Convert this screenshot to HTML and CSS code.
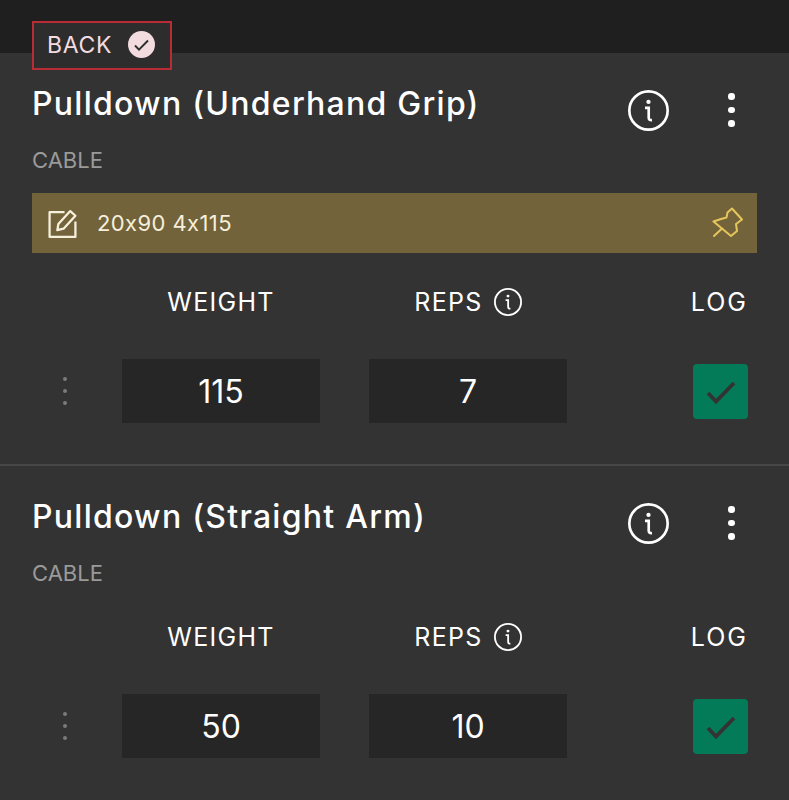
FILE: index.html
```html
<!DOCTYPE html>
<html lang="en">
<head>
    <meta charset="UTF-8">
    <meta name="viewport" content="width=device-width, initial-scale=1.0">
    <title>Workout</title>
    <link rel="stylesheet" href="styles.css">
</head>
<body>
    <svg class="icon-defs" width="0" height="0">
        <symbol id="info" viewBox="0 0 40 40">
            <circle cx="20" cy="20" r="18.7" fill="none" stroke="currentColor" stroke-width="2.6"/>
            <circle cx="20" cy="11.6" r="2.1" fill="currentColor"/>
            <path d="M16.6 17.4h3.6v9.600c0 1.800 1 2.600 3.200 2.400" fill="none" stroke="currentColor" stroke-width="2.6"/>
        </symbol>
        <symbol id="check" viewBox="0 0 30 30">
            <path d="M2 17l8 8.500L28 7" fill="none" stroke="currentColor" stroke-width="3.8"/>
        </symbol>
    </svg>

    <header class="topbar">
        <button class="back-button" type="button">
            <span>BACK</span>
            <span class="back-badge">
                <svg width="15" height="15"><use href="#check"/></svg>
            </span>
        </button>
    </header>

    <section class="exercise">
        <div class="exercise-head">
            <h2 class="exercise-title">Pulldown (Underhand Grip)</h2>
            <svg class="head-info" width="41" height="41"><use href="#info"/></svg>
            <div class="more-dots"><i></i><i></i><i></i></div>
        </div>
        <div class="exercise-type">CABLE</div>
        <div class="note">
            <svg class="note-edit" width="31" height="31" viewBox="0 0 30 30" fill="none" stroke="currentColor" stroke-width="2.2" stroke-linejoin="round">
                <path d="M17 4H2.500v24h25V13"/>
                <path d="M11 15.500L22.500 3l5 4.500-11.500 12.500-6 1.500z"/>
            </svg>
            <span class="note-text">20x90 4x115</span>
            <svg class="note-pin" width="32" height="32" viewBox="0 0 32 32" fill="none" stroke="currentColor" stroke-width="2" stroke-linejoin="round" stroke-linecap="round">
                <path d="M21 1.500l10 11-6 4.500 1 7-6 5-17.500-14.500 7.500-2.500 5.500-1.500 1-5z"/>
                <path d="M11 21.500l-8 7.500"/>
            </svg>
        </div>
        <div class="sets">
            <div></div>
            <div class="col-label">WEIGHT</div>
            <div class="col-label">REPS <svg width="28" height="28"><use href="#info"/></svg></div>
            <div class="col-label col-log">LOG</div>

            <div class="drag-dots"><i></i><i></i><i></i></div>
            <div class="set-value">115</div>
            <div class="set-value">7</div>
            <div class="log-box"><svg width="30" height="30"><use href="#check"/></svg></div>
        </div>
    </section>

    <section class="exercise">
        <div class="exercise-head">
            <h2 class="exercise-title">Pulldown (Straight Arm)</h2>
            <svg class="head-info" width="41" height="41"><use href="#info"/></svg>
            <div class="more-dots"><i></i><i></i><i></i></div>
        </div>
        <div class="exercise-type">CABLE</div>
        <div class="sets">
            <div></div>
            <div class="col-label">WEIGHT</div>
            <div class="col-label">REPS <svg width="28" height="28"><use href="#info"/></svg></div>
            <div class="col-label col-log">LOG</div>

            <div class="drag-dots"><i></i><i></i><i></i></div>
            <div class="set-value">50</div>
            <div class="set-value">10</div>
            <div class="log-box"><svg width="30" height="30"><use href="#check"/></svg></div>
        </div>
    </section>
</body>
</html>
```

FILE: styles.css
```css
html, body {
    height: 800px;
    overflow: hidden;
}
body {
    margin: 0;
    background: #333333;
    color: #ffffff;
    font-family: Inter, "Noto Sans", sans-serif;
    font-feature-settings: "calt" 0;
}
.icon-defs {
    display: block;
    height: 0;
}
.topbar {
    height: 53px;
    padding: 21px 0 0 32px;
    box-sizing: border-box;
    background: #1f1f1f;
}
.back-button {
    display: flex;
    align-items: center;
    width: 140px;
    height: 49px;
    padding: 0 0 2px 13px;
    box-sizing: border-box;
    border: 2px solid #b92c35;
    background: #2d2d2d;
    color: #f3dce0;
    font-family: inherit;
    font-feature-settings: inherit;
    font-size: 23px;
    letter-spacing: 0.7px;
}
.back-badge {
    display: flex;
    align-items: center;
    justify-content: center;
    width: 27px;
    height: 27px;
    margin-left: 16px;
    border-radius: 50%;
    background: #f3dce0;
    color: #2d2d2d;
}
.exercise {
    padding: 33px 32px 41px;
    border-bottom: 2px solid #474747;
}
.exercise:last-child {
    border-bottom: none;
}
.exercise-head {
    display: flex;
    align-items: center;
    height: 36px;
}
.exercise-title {
    flex: 1;
    margin: 0;
    font-size: 32px;
    font-weight: 500;
    line-height: 36px;
    letter-spacing: 1.27px;
}
.head-info {
    margin: 12px 0 0;
}
.more-dots {
    display: flex;
    flex-direction: column;
    gap: 7px;
    width: 8px;
    margin: 12px 21px 0 59px;
}
.more-dots i {
    width: 6.5px;
    height: 6.5px;
    border-radius: 50%;
    background: #ffffff;
}
.exercise-type {
    margin-top: 23px;
    font-size: 22px;
    line-height: 30px;
    color: #9a9a9a;
}
.note {
    display: flex;
    align-items: center;
    height: 60px;
    margin-top: 18px;
    padding: 0 14px 0 15px;
    background: #72633a;
    color: #f5efdc;
}
.note-text {
    flex: 1;
    margin-left: 19px;
    font-size: 22px;
    letter-spacing: 0.4px;
}
.note-pin {
    color: #e6c65c;
}
.sets {
    display: grid;
    grid-template-columns: 41px 198px 198px 1fr;
    column-gap: 49px;
    margin-top: 32px;
}
.col-label {
    display: flex;
    align-items: center;
    justify-content: center;
    gap: 11px;
    height: 34px;
    margin-bottom: 40px;
    font-size: 25px;
    letter-spacing: 1.3px;
}
.col-log {
    justify-content: flex-end;
    padding-right: 9px;
    letter-spacing: 2px;
}
.drag-dots {
    display: flex;
    flex-direction: column;
    align-items: center;
    align-self: center;
    justify-self: end;
    gap: 8px;
    width: 16px;
}
.drag-dots i {
    width: 4px;
    height: 4px;
    border-radius: 50%;
    background: #7b7b7b;
}
.set-value {
    display: flex;
    align-items: center;
    justify-content: center;
    height: 64px;
    background: #262626;
    font-size: 32px;
}
.log-box {
    display: flex;
    align-items: center;
    justify-content: center;
    justify-self: end;
    align-self: center;
    width: 55px;
    height: 55px;
    margin-right: 9px;
    border-radius: 4px;
    background: #037a58;
    color: #333333;
}
```
